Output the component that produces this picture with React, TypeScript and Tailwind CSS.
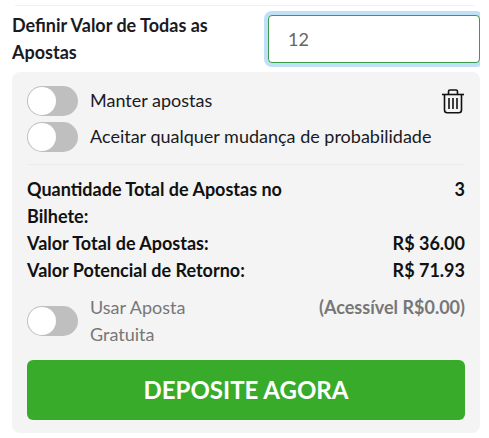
import { useState } from "react";

function Toggle() {
  return (
    <span className="flex h-[30px] w-[51px] shrink-0 items-center rounded-full bg-[#bfbfbf] p-px">
      <span className="h-[28px] w-[28px] rounded-full bg-white"></span>
    </span>
  );
}

function TrashIcon() {
  return (
    <svg width="24" height="25" viewBox="0 0 24 25" fill="none" stroke="#111" strokeWidth="1.6">
      <path d="M1 5.5h22" />
      <path d="M7.5 5V2.5q0-1.5 1.5-1.5h6q1.5 0 1.5 1.5V5" />
      <path d="M3.5 5.5V21q0 2.8 2.8 2.8h11.4q2.8 0 2.8-2.8V5.5" />
      <path d="M8 9v11M12 9v11M16 9v11" />
    </svg>
  );
}

export default function App() {
  const [amount, setAmount] = useState("12");

  return (
    <div className="h-[438px] w-[489px] overflow-hidden bg-white pl-3 pr-[9px] pt-[5px] font-['Lato',sans-serif] text-[18px] leading-[27px] text-[#1a1a22]">
      <div className="ml-[3px] mr-[5px] border-t border-[#f1f1f1]"></div>
      <div className="flex h-[66px] overflow-hidden pt-[9px]">
        <div className="-mt-[3px] w-[256px] shrink-0 pr-[24px] font-bold">Definir Valor de Todas as Apostas</div>
        <div className="grow">
          <input
            value={amount}
            onChange={(e) => setAmount(e.target.value)}
            className="h-[48px] w-full rounded-[4px] border border-[#3c9a4a] bg-white pl-[19px] text-[#666] shadow-[0_0_0_4px_#bfe0f7] outline-none"
          />
        </div>
      </div>
      <div className="h-[361px] rounded-[8px] bg-[#f4f4f4] px-[15px] pt-[14px]">
        <div className="flex items-center gap-3">
          <Toggle />
          <span className="grow pb-[2px]">Manter apostas</span>
          <TrashIcon />
        </div>
        <div className="mt-[6px] flex items-center gap-3">
          <Toggle />
          <span className="pb-[2px]">Aceitar qualquer mudança de probabilidade</span>
        </div>
        <div className="mt-3 border-t border-[#ebebeb]"></div>
        <div className="mt-[11px] font-bold text-[#111]">
          <div className="flex justify-between">
            <span className="w-[280px]">Quantidade Total de Apostas no Bilhete:</span>
            <span>3</span>
          </div>
          <div className="flex justify-between">
            <span>Valor Total de Apostas:</span>
            <span>R$ 36.00</span>
          </div>
          <div className="flex justify-between">
            <span>Valor Potencial de Retorno:</span>
            <span>R$ 71.93</span>
          </div>
        </div>
        <div className="mt-[10px] flex items-center justify-between text-[#777]">
          <div className="flex items-center gap-3">
            <Toggle />
            <span className="w-[120px]">Usar Aposta Gratuita</span>
          </div>
          <span className="self-start font-bold">(Acessível R$0.00)</span>
        </div>
        <button className="mt-[12px] h-[60px] w-full rounded-[6px] bg-[#38ac2a] pb-[2px] text-[24px] font-bold text-white">
          DEPOSITE AGORA
        </button>
      </div>
    </div>
  );
}
